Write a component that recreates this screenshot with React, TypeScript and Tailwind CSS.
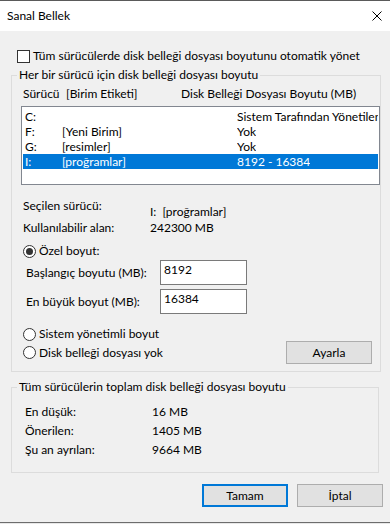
const drives = [
    { drive: 'C:', label: '', size: 'Sistem Tarafından Yönetilen' },
    { drive: 'F:', label: '[Yeni Birim]', size: 'Yok' },
    { drive: 'G:', label: '[resimler]', size: 'Yok' },
    { drive: 'I:', label: '[proğramlar]', size: '8192 - 16384', selected: true },
];

const totals = [
    { label: 'En düşük:', value: '16 MB' },
    { label: 'Önerilen:', value: '1405 MB' },
    { label: 'Şu an ayrılan:', value: '9664 MB' },
];

function Radio({ checked, label }: { checked?: boolean; label: string }) {
    return (
        <div className="flex h-[16px] items-center gap-[3px]">
            <span className="flex h-[13px] w-[13px] items-center justify-center rounded-full border border-[#333333] bg-white">
                {checked && <span className="h-[7px] w-[7px] rounded-full bg-[#333333]" />}
            </span>
            <span>{label}</span>
        </div>
    );
}

function SizeField({ label, value }: { label: string; value: string }) {
    return (
        <div className="ml-[14px] flex h-[25px] items-center">
            <span className="w-[134px] shrink-0">{label}</span>
            <div className="h-[25px] w-[87px] border border-[#7a7a7a] bg-white pl-[3px] pt-[1px]">{value}</div>
        </div>
    );
}

export default function App() {
    return (
        <div className="flex h-[524px] w-[390px] flex-col overflow-hidden bg-[#f0f0f0] font-['Lato',sans-serif] text-[12px] leading-[16px] text-black">
            <div className="h-px bg-[#5a5a5a]" />
            <div className="flex h-[30px] items-center justify-between bg-white pl-[7px] pr-[8px]">
                <span>Sanal Bellek</span>
                <svg width="10" height="10" viewBox="0 0 10 10">
                    <path d="M0.5 0.5 L9.5 9.5 M9.5 0.5 L0.5 9.5" stroke="#000" strokeWidth="1" fill="none" />
                </svg>
            </div>

            <div className="ml-[17px] mt-[17px] flex h-[16px] items-center gap-[3px] whitespace-nowrap">
                <span className="h-[13px] w-[13px] shrink-0 border border-[#333333] bg-white" />
                <span>Tüm sürücülerde disk belleği dosyası boyutunu otomatik yönet</span>
            </div>

            <fieldset className="ml-[11px] mt-[3px] w-[368px] border border-[#dcdcdc] pb-[7px]">
                <legend className="ml-[5px] px-[2px]">Her bir sürücü için disk belleği dosyası boyutu</legend>

                <div className="ml-[11px] mt-[3px] flex whitespace-nowrap">
                    <span className="w-[43px] shrink-0">Sürücü</span>
                    <span className="w-[115px] shrink-0">[Birim Etiketi]</span>
                    <span>Disk Belleği Dosyası Boyutu (MB)</span>
                </div>

                <div className="ml-[9px] mt-[4px] h-[79px] w-[359px] border border-[#828790] bg-white px-[1px] pt-[2px]">
                    {drives.map((d) => (
                        <div
                            key={d.drive}
                            className={`flex h-[15px] items-center whitespace-nowrap pl-[2px] ${d.selected ? 'bg-[#0078d7] text-white' : ''}`}
                        >
                            <span className="w-[37px] shrink-0">{d.drive}</span>
                            <span className="w-[175px] shrink-0">{d.label}</span>
                            <span className="overflow-hidden">{d.size}</span>
                        </div>
                    ))}
                </div>

                <div className="ml-[11px] mt-[13px] flex h-[22px]">
                    <span className="w-[127px] shrink-0">Seçilen sürücü:</span>
                    <span className="mt-[6px] whitespace-pre">I:  [proğramlar]</span>
                </div>
                <div className="ml-[11px] flex">
                    <span className="w-[127px] shrink-0">Kullanılabilir alan:</span>
                    <span>242300 MB</span>
                </div>

                <div className="ml-[11px] mt-[7px]">
                    <Radio checked label="Özel boyut:" />
                </div>
                <div className="mt-[1px] flex flex-col gap-[4px]">
                    <SizeField label="Başlangıç boyutu (MB):" value="8192" />
                    <SizeField label="En büyük boyut (MB):" value="16384" />
                </div>

                <div className="ml-[11px] mt-[12px]">
                    <Radio label="Sistem yönetimli boyut" />
                </div>
                <div className="ml-[11px] mt-[-1px] flex h-[23px] items-center justify-between">
                    <Radio label="Disk belleği dosyası yok" />
                    <button className="mr-[8px] h-[23px] w-[86px] border border-[#adadad] bg-[#e1e1e1]">Ayarla</button>
                </div>
            </fieldset>

            <fieldset className="ml-[11px] mt-[7px] w-[368px] border border-[#dcdcdc] pb-[14px]">
                <legend className="ml-[5px] px-[2px]">Tüm sürücülerin toplam disk belleği dosyası boyutu</legend>
                <div className="ml-[13px] mt-[9px] flex flex-col gap-[3px]">
                    {totals.map((t) => (
                        <div key={t.label} className="flex">
                            <span className="w-[127px] shrink-0">{t.label}</span>
                            <span>{t.value}</span>
                        </div>
                    ))}
                </div>
            </fieldset>

            <div className="mt-[11px] flex justify-end gap-[9px] pr-[7px]">
                <button className="h-[23px] w-[86px] border-2 border-[#0078d7] bg-[#e1e1e1]">Tamam</button>
                <button className="h-[23px] w-[86px] border border-[#adadad] bg-[#e1e1e1]">İptal</button>
            </div>

            <div className="flex-1" />
            <div className="h-px bg-[#6d6d6d]" />
            <div className="h-px bg-[#e8e8e8]" />
        </div>
    );
}
